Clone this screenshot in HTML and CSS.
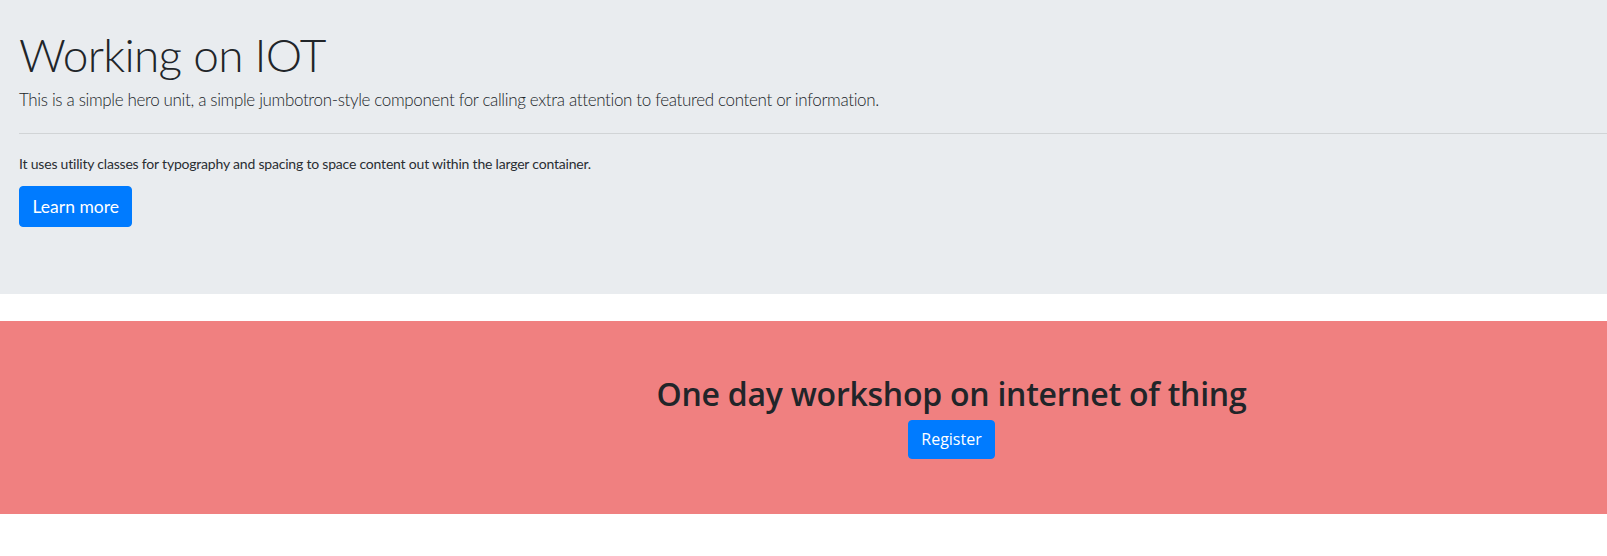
FILE: index.html
```html
<!DOCTYPE html>
<html lang="en">
<head>
<meta charset="utf-8">
<title>Working on IOT</title>
<link rel="stylesheet" href="styles.css">
</head>
<body>
<div class="jumbotron">
  <h1 class="display">Working on IOT</h1>
  <p class="lead">This is a simple hero unit, a simple jumbotron-style component for calling extra attention to featured content or information.</p>
  <hr class="divider">
  <p class="note">It uses utility classes for typography and spacing to space content out within the larger container.</p>
  <a class="btn btn-lg" href="#">Learn more</a>
</div>
<section class="banner">
  <div class="banner-inner">
    <h2 class="banner-title">One day workshop on internet of thing</h2>
    <a class="btn btn-md" href="#">Register</a>
  </div>
</section>
</body>
</html>
```
FILE: styles.css
```css
html, body {
  margin: 0;
  padding: 0;
  background: #fff;
  color: #212529;
  font-family: "Open Sans", "Noto Sans", sans-serif;
}
body {
  overflow-x: hidden;
}
.jumbotron {
  background: #e9ecef;
  padding: 27px 0 67px 19px;
  margin-bottom: 27px;
  font-family: Lato, "Open Sans", sans-serif;
}
.display {
  margin: 0;
  font-size: 46px;
  line-height: 55px;
  font-weight: 300;
  letter-spacing: -0.7px;
}
.lead {
  margin: 5px 0 0;
  font-size: 17px;
  line-height: 26px;
  font-weight: 300;
  letter-spacing: -0.35px;
}
.divider {
  margin: 20px 0 0;
  border: 0;
  border-top: 1px solid rgba(0, 0, 0, 0.1);
  height: 0;
}
.note {
  margin: 19px 0 0;
  font-size: 14px;
  line-height: 21px;
  letter-spacing: -0.2px;
  color: #2a2e33;
}
.btn {
  display: inline-block;
  background: #007bff;
  color: #fff;
  text-decoration: none;
  border: 1px solid #007bff;
  font-weight: 400;
}
.btn-lg {
  margin-top: 12px;
  font-size: 17.5px;
  line-height: 25px;
  padding: 7px 12.5px;
  border-radius: 4px;
}
.btn-md {
  margin-top: 7px;
  font-size: 16px;
  line-height: 25px;
  padding: 6px 12.5px;
  border-radius: 4px;
}
.banner {
  background: #f08080;
  overflow: hidden;
}
.banner-inner {
  width: 1903px;
  text-align: center;
  padding: 54px 0 55px;
}
.banner-title {
  margin: 0;
  font-size: 32px;
  line-height: 38px;
  font-weight: 600;
  letter-spacing: -0.25px;
}
```
